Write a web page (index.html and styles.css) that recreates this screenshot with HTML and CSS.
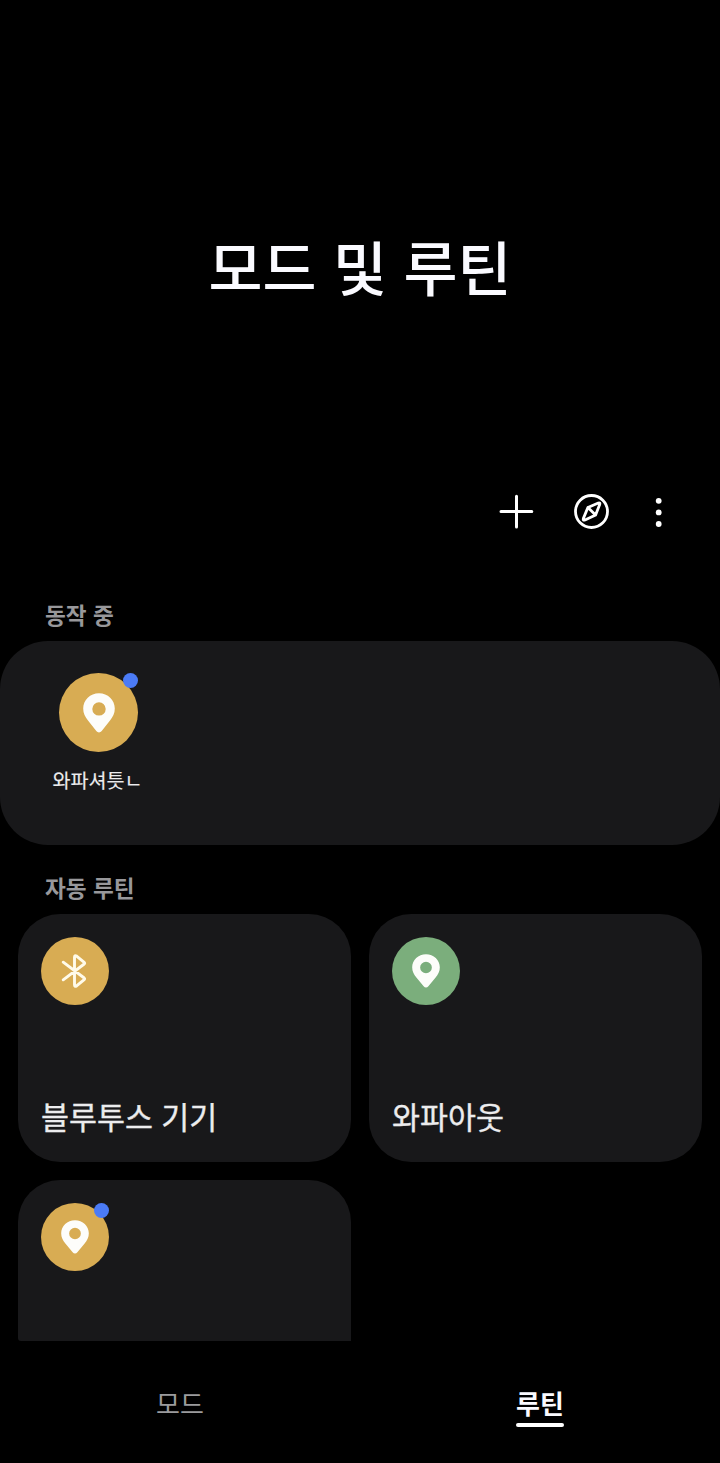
FILE: index.html
```html
<!DOCTYPE html>
<html lang="ko">
<head>
<meta charset="utf-8">
<title>모드 및 루틴</title>
<link rel="stylesheet" href="styles.css">
</head>
<body>
<svg class="defs" width="0" height="0">
  <symbol id="pin" viewBox="0 0 32 40" preserveAspectRatio="none">
    <path fill="currentColor" fill-rule="evenodd" d="M16 0.2C7.2 0.2 0.2 7 0.2 15.6C0.2 20.4 2.2 24 5 27.6L13.3 38C14.8 39.9 17.2 39.9 18.7 38L27 27.6C29.8 24 31.8 20.4 31.8 15.6C31.8 7 24.8 0.2 16 0.2ZM16 9.2A6.7 6.7 0 1 1 16 22.6A6.7 6.7 0 1 1 16 9.2Z"/>
  </symbol>
</svg>
<div class="screen">
  <header class="header"><h1 class="title">모드 및 루틴</h1></header>
  <div class="toolbar">
    <svg class="tool" width="36" height="36" viewBox="0 0 36 36"><path d="M17.5 2.3V33.1M2 17.5H32.8"/></svg>
    <svg class="tool tool-compass" width="36" height="36" viewBox="0 0 36 36">
      <circle cx="17.5" cy="17.5" r="16"/>
      <path d="M13.9 13.5L24.3 9Q26.4 8.3 25.7 10.4L21.6 21L11 26Q8.7 26.7 9.4 24.4ZM13.9 13.5L21.6 21"/>
    </svg>
    <svg class="more" width="8" height="32" viewBox="0 0 8 32"><circle cx="3.7" cy="4.8" r="2.9"/><circle cx="3.7" cy="16.4" r="2.9"/><circle cx="3.7" cy="28" r="2.9"/></svg>
  </div>
  <main class="content">
    <h2 class="section-title">동작 중</h2>
    <section class="running">
      <div class="running-item">
        <div class="icon icon-large gold"><svg class="pin"><use href="#pin"/></svg><span class="badge"></span></div>
        <span class="running-name">와파셔틋ㄴ</span>
      </div>
    </section>
    <h2 class="section-title section-auto">자동 루틴</h2>
    <section class="grid">
      <article class="card">
        <div class="icon gold"><svg class="bluetooth" width="28" height="36" viewBox="0 0 28 36"><path d="M2.2 9.2L23.2 25Q24.1 25.8 23.2 26.6L15.6 32.9Q13.5 34.2 13.5 31.8V4.2Q13.5 1.8 15.6 3.1L23.2 9.4Q24.1 10.2 23.2 11L2.2 26.8"/></svg></div>
        <span class="card-name">블루투스 기기</span>
      </article>
      <article class="card">
        <div class="icon green"><svg class="pin"><use href="#pin"/></svg></div>
        <span class="card-name">와파아웃</span>
      </article>
      <article class="card">
        <div class="icon gold"><svg class="pin"><use href="#pin"/></svg><span class="badge"></span></div>
      </article>
    </section>
  </main>
  <nav class="tabs">
    <span class="tab"><span class="tab-label">모드</span></span>
    <span class="tab"><span class="tab-label active">루틴</span></span>
  </nav>
</div>
</body>
</html>
```
FILE: styles.css
```css
* { box-sizing: border-box; }
body {
  margin: 0;
  background: #000;
  color: #fafaff;
  font-family: "Noto Sans CJK KR", sans-serif;
}
.defs { display: block; }
.screen {
  width: 720px;
  height: 1463px;
  display: flex;
  flex-direction: column;
  overflow: hidden;
}
.header {
  height: 476px;
  padding-top: 221px;
  text-align: center;
  flex: none;
}
.title {
  margin: 0;
  font-size: 58.7px;
  line-height: 90px;
  font-weight: 500;
}
.toolbar {
  height: 72px;
  flex: none;
  display: flex;
  justify-content: flex-end;
  align-items: center;
  padding-right: 57px;
}
.tool {
  fill: none;
  stroke: #fff;
  stroke-width: 3;
  stroke-linecap: round;
  stroke-linejoin: round;
}
.tool-compass { margin: 0 45px 0 39px; stroke-width: 2.8; }
.more { fill: #fff; }
.content {
  height: 793px;
  flex: none;
  overflow: hidden;
}
.section-title {
  margin: 0;
  padding: 49px 0 8px 45px;
  font-size: 22.6px;
  line-height: 36px;
  font-weight: 700;
  color: #98989b;
}
.section-auto { padding: 25px 0 8px 45px; }
.running {
  height: 204px;
  padding: 32px 38px;
  border-radius: 48px;
  background: #18181a;
}
.running-item {
  width: 120px;
  display: flex;
  flex-direction: column;
  align-items: center;
}
.running-name {
  margin-top: 13px;
  margin-right: 1px;
  font-size: 19.6px;
  line-height: 30px;
  color: #ececee;
  -webkit-text-stroke: 0.15px #ececee;
}
.grid {
  height: 427px;
  margin: 0 18px;
  overflow: hidden;
  border-bottom-left-radius: 3px;
  display: grid;
  grid-template-columns: 333px 333px;
  grid-auto-rows: 248px;
  gap: 18px;
}
.card {
  padding: 23px 23px 24px;
  border-radius: 42px;
  background: #18181a;
  display: flex;
  flex-direction: column;
  justify-content: space-between;
}
.card-name {
  font-size: 30.4px;
  line-height: 44px;
  color: #ececee;
  -webkit-text-stroke: 0.35px #ececee;
}
.icon {
  position: relative;
  width: 68px;
  height: 68px;
  border-radius: 50%;
  display: flex;
  align-items: center;
  justify-content: center;
  color: #fdfdfa;
}
.icon-large { width: 79px; height: 79px; }
.gold { background: #d8ac53; }
.green { background: #7bae7c; }
.pin { width: 28px; height: 34px; }
.icon-large .pin { width: 32px; height: 40px; margin-left: 1px; }
.bluetooth {
  fill: none;
  stroke: #fffbea;
  stroke-width: 2.9;
  stroke-linecap: round;
  stroke-linejoin: round;
}
.badge {
  position: absolute;
  top: 0;
  right: 0;
  width: 15px;
  height: 15px;
  border-radius: 50%;
  background: #4b7bf6;
}
.tabs {
  flex: 1;
  display: flex;
}
.tab {
  flex: 1;
  display: flex;
  justify-content: center;
  align-items: flex-start;
  padding-top: 42px;
}
.tab-label {
  font-size: 26px;
  line-height: 40px;
  height: 44px;
  color: #9b9b9d;
  font-weight: 400;
}
.tab-label.active {
  display: flex;
  flex-direction: column;
  color: #fafaff;
  font-weight: 700;
}
.tab-label.active::after {
  content: "";
  height: 4px;
  flex: none;
  border-radius: 2px;
  background: #fff;
}
```
